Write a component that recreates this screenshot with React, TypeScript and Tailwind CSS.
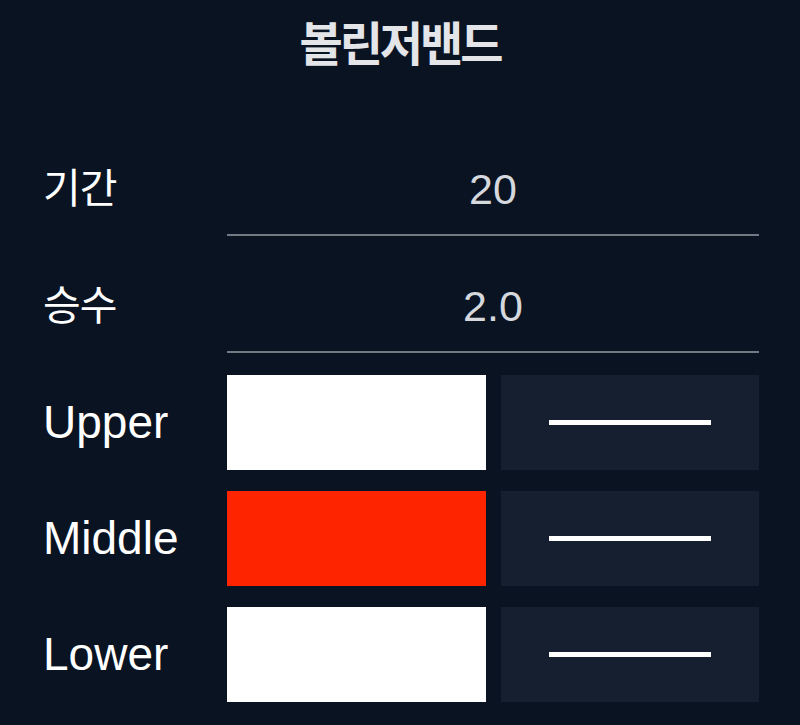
import React from 'react'

const fields = [
    { label: '기간', value: '20' },
    { label: '승수', value: '2.0' },
]

const lines = [
    { label: 'Upper', color: 'bg-white' },
    { label: 'Middle', color: 'bg-[#ff2400]' },
    { label: 'Lower', color: 'bg-white' },
]

export default function App() {
    return (
        <div className="min-h-screen w-full bg-[#0a1322] font-['Liberation_Sans','Noto_Sans_CJK_KR',sans-serif] text-white">
            <h1 className="flex h-[91px] items-center justify-center text-[47px] font-bold tracking-[-3px] text-[#e3e5e9]">
                볼린저밴드
            </h1>

            <div className="mt-[55px] flex flex-col pl-[43px] pr-[41px]">
                {fields.map((f, i) => (
                    <div key={f.label} className={`grid grid-cols-[184px_1fr] ${i > 0 ? 'mt-[27px]' : ''}`}>
                        <div className="flex h-[88px] items-center text-[41px] tracking-[-1px]">{f.label}</div>
                        <div className="flex h-[90px] items-center justify-center border-b-2 border-[#737983] pb-[2px] text-[43px] text-[#d5d8dd]">
                            {f.value}
                        </div>
                    </div>
                ))}

                <div className="mt-[22px] flex flex-col gap-[21px]">
                    {lines.map((l) => (
                        <div key={l.label} className="grid grid-cols-[184px_1fr]">
                            <div className="flex h-[95px] items-center text-[46px]">{l.label}</div>
                            <div className="grid grid-cols-2 gap-[15px]">
                                <div className={`h-[95px] ${l.color}`} />
                                <div className="flex h-[95px] items-center justify-center bg-[#161f30]">
                                    <div className="h-[5px] w-[162px] bg-white" />
                                </div>
                            </div>
                        </div>
                    ))}
                </div>
            </div>
        </div>
    )
}
